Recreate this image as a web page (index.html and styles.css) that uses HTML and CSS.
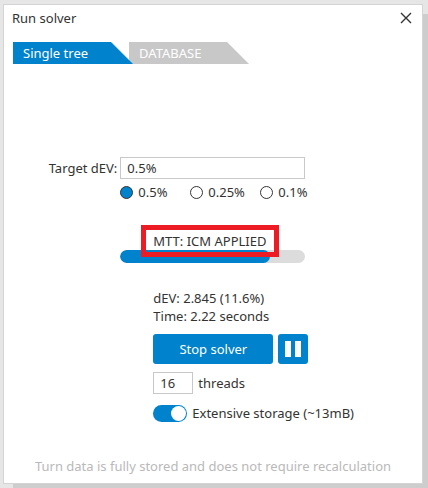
FILE: index.html
```html
<!DOCTYPE html>
<html lang="en">
<head>
  <meta charset="UTF-8" />
  <meta name="viewport" content="width=device-width, initial-scale=1.0" />
  <title>Run solver</title>
  <link rel="stylesheet" href="styles.css">
</head>
<body>
  <main class="dialog">
    <header class="title-bar">
      <h1>Run solver</h1>
      <button class="close" type="button" aria-label="Close">
        <svg width="12" height="12" viewBox="0 0 12 12"><path d="M1 1 L11 11 M11 1 L1 11" /></svg>
      </button>
    </header>

    <nav class="tabs">
      <button class="tab active" type="button">Single tree</button>
      <button class="tab" type="button">DATABASE</button>
    </nav>

    <form class="solver">
      <label class="target-label" for="target">Target dEV:</label>
      <div class="column">
        <input class="field" id="target" type="text" value="0.5%">
        <div class="presets">
          <label><input type="radio" name="preset" checked>0.5%</label>
          <label><input type="radio" name="preset">0.25%</label>
          <label><input type="radio" name="preset">0.1%</label>
        </div>

        <div class="progress-block">
          <div class="progress"><div class="progress-fill" style="width: 81%"></div></div>
          <p class="status">MTT: ICM APPLIED</p>
        </div>

        <div class="details">
          <p>dEV: 2.845 (11.6%)</p>
          <p>Time: 2.22 seconds</p>
          <div class="actions">
            <button class="stop" type="button">Stop solver</button>
            <button class="pause" type="button" aria-label="Pause">
              <svg width="16" height="16" viewBox="0 0 16 16"><path d="M0 0h6v16H0zM10 0h6v16h-6z" /></svg>
            </button>
          </div>
          <div class="threads">
            <input class="field" id="threads" type="text" value="16">
            <label for="threads">threads</label>
          </div>
          <label class="storage"><input type="checkbox" checked>Extensive storage (~13mB)</label>
        </div>
      </div>
    </form>

    <footer class="note">Turn data is fully stored and does not require recalculation</footer>
  </main>
</body>
</html>
```

FILE: styles.css
```css
* {
  margin: 0;
  padding: 0;
  box-sizing: border-box;
}
body {
  display: flex;
  min-height: 100vh;
  padding: 4px 5px 4px 3px;
  background: #e6e6e6;
  overflow: hidden;
}
body, input, button {
  font-family: "Noto Sans", "Open Sans", sans-serif;
  font-size: 13px;
  line-height: 18px;
  color: #333;
}
button {
  border: none;
  cursor: pointer;
}
.dialog {
  flex: 1;
  display: flex;
  flex-direction: column;
  padding: 4px 8px 8px;
  background: white;
  border: 1px solid #d4d4d4;
  box-shadow: 10px 10px 0 #cdcdcd;
}
.title-bar {
  display: flex;
  align-items: center;
  justify-content: space-between;
  padding-right: 2px;
}
.title-bar h1 {
  font-size: 13px;
  font-weight: normal;
}
.close {
  display: flex;
  background: none;
}
.close svg {
  fill: none;
  stroke: #333;
  stroke-width: 1.4;
}
.tabs {
  display: flex;
  margin: 15px 0 0 1px;
}
.tab {
  width: 120px;
  height: 22px;
  padding-left: 10px;
  text-align: left;
  color: white;
  background: #c8c8c8;
  clip-path: polygon(0 0, 98px 0, 100% 100%, 0 100%);
}
.tab.active {
  position: relative;
  z-index: 1;
  background: #0082cc;
}
.tab + .tab {
  margin-left: -4px;
}
.solver {
  display: flex;
  justify-content: center;
  gap: 3px;
  margin-top: 93px;
  padding-right: 72px;
}
.target-label {
  padding-top: 2px;
}
.column {
  width: 185px;
}
.field {
  width: 100%;
  height: 22px;
  padding: 0 6px;
  border: 1px solid #c8c8c8;
}
.presets {
  display: flex;
  margin-top: 4px;
  white-space: nowrap;
}
.presets label {
  flex: 0 0 70px;
  display: flex;
  align-items: center;
  gap: 5px;
}
.presets input {
  appearance: none;
  width: 13px;
  height: 13px;
  border: 1px solid #333;
  border-radius: 50%;
}
.presets input:checked {
  background: #0082cc;
}
.progress-block {
  position: relative;
  margin-top: 24px;
  padding-top: 25px;
}
.progress {
  height: 13px;
  background: #dcdcdc;
  border-radius: 7px;
  overflow: hidden;
}
.progress-fill {
  height: 100%;
  background: #0082cc;
  border-radius: 7px;
}
/* frame overlaps the top half of the bar */
.status {
  position: absolute;
  top: 0;
  left: 21px;
  width: 138px;
  height: 32px;
  padding: 2px 0 0 7px;
  border: 5px solid #ed1c24;
  white-space: nowrap;
}
.details {
  margin: 26px 0 0 33px;
  white-space: nowrap;
}
.actions {
  display: flex;
  gap: 5px;
  margin-top: 9px;
}
.stop, .pause {
  height: 30px;
  background: #0082cc;
  border-radius: 3px;
  color: white;
}
.stop {
  flex: 0 0 120px;
}
.pause {
  flex: 0 0 30px;
  display: flex;
  align-items: center;
  justify-content: center;
}
.pause svg {
  fill: white;
}
.threads {
  display: flex;
  align-items: center;
  gap: 5px;
  margin-top: 8px;
}
.threads .field {
  width: 40px;
}
.storage {
  display: flex;
  align-items: center;
  gap: 5px;
  margin-top: 10px;
}
.storage input {
  appearance: none;
  display: flex;
  flex: none;
  width: 34px;
  height: 17px;
  padding: 1px;
  background: #b4b4b4;
  border-radius: 9px;
}
.storage input::before {
  content: "";
  width: 15px;
  height: 15px;
  background: white;
  border-radius: 50%;
}
.storage input:checked {
  justify-content: flex-end;
  background: #0082cc;
}
.note {
  margin-top: auto;
  text-align: center;
  color: #b9b9b9;
}
```
